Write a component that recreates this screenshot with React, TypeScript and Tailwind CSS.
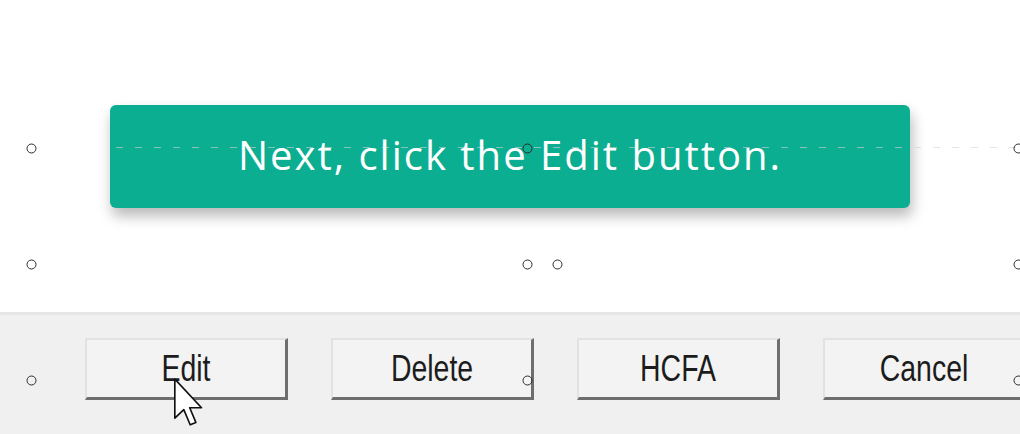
import React from 'react';

const handles: [number, number][] = [
  [31, 148],
  [527, 148],
  [1018, 148],
  [31, 264],
  [527, 264],
  [557, 264],
  [1018, 264],
  [31, 380],
  [527, 380],
  [1018, 380],
];

const WinButton: React.FC<{ label: string }> = ({ label }) => (
  <div className="w-[203px] h-[62px] shrink-0 flex items-center justify-center bg-[#f3f3f3] border-t-2 border-l-2 border-t-[#e2e2e2] border-l-[#e2e2e2] border-r-[3px] border-b-[3px] border-r-[#6e6e6e] border-b-[#6e6e6e]">
    <span
      className="text-[36px] leading-none text-[#1c1c1c] scale-x-[0.79] inline-block"
      style={{ fontFamily: '"Liberation Sans", Arial, sans-serif' }}
    >
      {label}
    </span>
  </div>
);

const Cursor = () => (
  <svg width="36" height="52" viewBox="0 0 13 22" className="absolute left-[171px] top-[378px]">
    <path
      d="M0.5 0.5 L0.5 17 L4.3 13.4 L7 19.8 L9.4 18.8 L6.8 12.6 L11.8 12.6 Z"
      fill="#fff"
      stroke="#111"
      strokeWidth="0.7"
      strokeLinejoin="round"
    />
  </svg>
);

export default function App() {
  return (
    <div className="relative w-[1020px] h-[434px] overflow-hidden bg-white">
      <div className="h-[312px] pt-[105px] pl-[110px]">
        <div className="relative w-[800px] h-[103px] rounded-md bg-[#0bae90] shadow-[2px_8px_14px_rgba(0,0,0,0.28)] flex items-center justify-center">
          <span
            className="relative z-10 text-white text-[40px] font-medium tracking-[2px] leading-none -mt-1"
            style={{ fontFamily: '"Open Sans", Lato, sans-serif' }}
          >
            Next, click the Edit button.
          </span>
        </div>
      </div>
      <div className="h-[3px] bg-[#e6e6e6]" />
      <div className="h-[119px] bg-[#f0f0f0] pt-[23px] pl-[85px] flex gap-[43px]">
        <WinButton label="Edit" />
        <WinButton label="Delete" />
        <WinButton label="HCFA" />
        <WinButton label="Cancel" />
      </div>

      <svg className="absolute left-0 top-0 pointer-events-none" width="1020" height="434">
        <line x1="116" y1="147.5" x2="1016" y2="147.5" stroke="rgba(210,210,210,0.6)" strokeWidth="1" strokeDasharray="7 12" />
        {handles.map(([x, y], i) => (
          <circle key={i} cx={x + 0.5} cy={y + 0.5} r="4.5" fill="none" stroke="#2b2b2b" strokeWidth="1" />
        ))}
      </svg>
      <Cursor />
    </div>
  );
}
